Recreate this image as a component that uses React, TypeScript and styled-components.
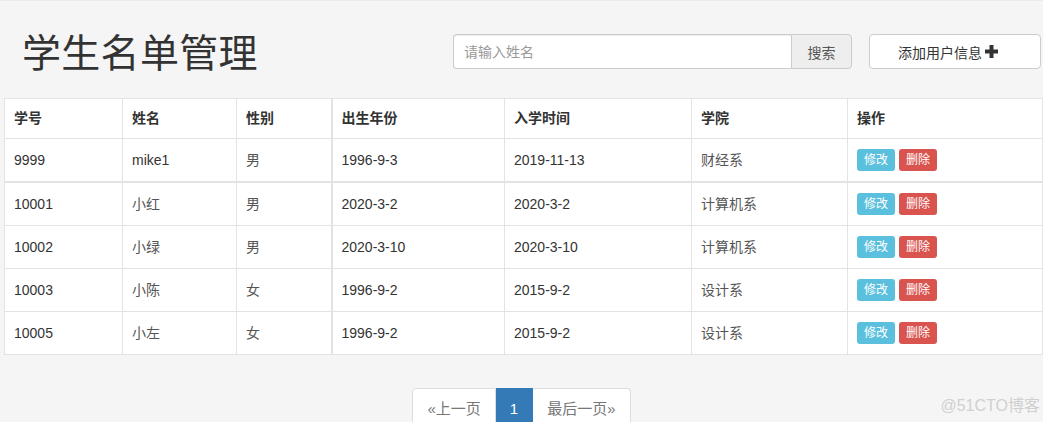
import React from "react";
import styled, { createGlobalStyle } from "styled-components";

const GlobalStyle = createGlobalStyle`
  html, body {
    margin: 0;
    padding: 0;
    background: #fff;
    font-family: "Liberation Sans", "Noto Sans CJK SC", sans-serif;
    color: #333;
  }
`;

const Page = styled.div`
  position: relative;
  width: 1043px;
  height: 422px;
  overflow: hidden;
  background: #f5f5f5;
  border-top: 1px solid #ececec;
  box-sizing: border-box;
`;

const Header = styled.div`
  display: flex;
  align-items: flex-start;
  height: 97px;
  padding: 0 2px 0 22px;
  box-sizing: border-box;
`;

const Title = styled.h1`
  margin: 30px 0 0;
  font-size: 39px;
  line-height: 46px;
  font-weight: normal;
  letter-spacing: 0.3px;
  color: #333;
`;

const InputGroup = styled.div`
  display: flex;
  margin: 33px 0 0 auto;
  width: 399px;
  height: 35px;
`;

const SearchInput = styled.input`
  flex: 1;
  min-width: 0;
  border: 1px solid #ccc;
  border-right: none;
  border-radius: 4px 0 0 4px;
  padding: 0 10px;
  font-size: 14px;
  font-family: inherit;
  background: #fff;
  box-shadow: inset 0 1px 1px rgba(0, 0, 0, 0.075);
  &::placeholder {
    color: #999;
  }
`;

const Addon = styled.span`
  display: flex;
  align-items: center;
  justify-content: center;
  width: 59px;
  background: #eee;
  border: 1px solid #ccc;
  border-radius: 0 4px 4px 0;
  font-size: 14px;
  color: #555;
`;

const AddButton = styled.button`
  display: flex;
  align-items: center;
  gap: 3px;
  margin: 33px 0 0 17px;
  width: 172px;
  height: 35px;
  background: #fff;
  border: 1px solid #ccc;
  border-radius: 4px;
  font-family: inherit;
  font-size: 14px;
  color: #333;
  padding: 0 0 0 28px;
`;

const Table = styled.table`
  margin-left: 4px;
  width: 1038px;
  border-collapse: collapse;
  table-layout: fixed;
  background: #fff;
  font-size: 14px;
`;

const Th = styled.th<{ $thick?: boolean }>`
  text-align: left;
  font-weight: bold;
  padding: 10px 9px;
  line-height: 19px;
  border: 1px solid #e3e3e3;
  border-left-width: ${(p) => (p.$thick ? "2px" : "1px")};
  color: #333;
`;

const Td = styled.td<{ $thick?: boolean; $light?: boolean }>`
  padding: 10px 9px;
  line-height: 21px;
  border: 1px solid #e3e3e3;
  border-left-width: ${(p) => (p.$thick ? "2px" : "1px")};
  color: ${(p) => (p.$light ? "#555" : "#333")};
  white-space: nowrap;
  vertical-align: middle;
`;

const Row = styled.tr<{ $split?: boolean }>`
  & > td {
    border-bottom: ${(p) => (p.$split ? "2px solid #e3e3e3" : "1px solid #e3e3e3")};
  }
`;

const SmallButton = styled.span<{ $color: string }>`
  display: inline-block;
  height: 22px;
  line-height: 22px;
  padding: 0 7px;
  margin-right: 4px;
  border-radius: 3px;
  font-size: 12px;
  color: #fff;
  background: ${(p) => p.$color};
  vertical-align: top;
`;

const Pager = styled.ul`
  display: flex;
  justify-content: center;
  list-style: none;
  margin: 33px 0 0;
  padding: 0;
`;

const PageItem = styled.li<{ $active?: boolean; $first?: boolean; $last?: boolean }>`
  height: 40px;
  padding: 0 14px;
  line-height: 40px;
  font-size: 15px;
  border: 1px solid ${(p) => (p.$active ? "#337ab7" : "#ddd")};
  border-left: ${(p) => (p.$first ? "1px solid #ddd" : "none")};
  border-radius: ${(p) => (p.$first ? "4px 0 0 0" : p.$last ? "0 4px 0 0" : "0")};
  background: ${(p) => (p.$active ? "#337ab7" : "#fff")};
  color: ${(p) => (p.$active ? "#fff" : "#777")};
`;

const Watermark = styled.div`
  position: absolute;
  right: 3px;
  bottom: 6px;
  font-size: 16px;
  color: #d0d0d0;
`;

const PlusIcon = () => (
  <svg width="13" height="13" viewBox="0 0 13 13">
    <path d="M4.5 0h4v4.5H13v4H8.5V13h-4V8.5H0v-4h4.5z" fill="#333" />
  </svg>
);

const students = [
  ["9999", "mike1", "男", "1996-9-3", "2019-11-13", "财经系"],
  ["10001", "小红", "男", "2020-3-2", "2020-3-2", "计算机系"],
  ["10002", "小绿", "男", "2020-3-10", "2020-3-10", "计算机系"],
  ["10003", "小陈", "女", "1996-9-2", "2015-9-2", "设计系"],
  ["10005", "小左", "女", "1996-9-2", "2015-9-2", "设计系"],
];

const widths = [118, 114, 95, 173, 187, 156, 195];
const heads = ["学号", "姓名", "性别", "出生年份", "入学时间", "学院", "操作"];

const isCjk = (s: string) => /[\u4e00-\u9fff]/.test(s);

export default function App() {
  return (
    <>
      <GlobalStyle />
      <Page>
        <Header>
          <Title>学生名单管理</Title>
          <InputGroup>
            <SearchInput placeholder="请输入姓名" />
            <Addon>搜索</Addon>
          </InputGroup>
          <AddButton>
            添加用户信息
            <PlusIcon />
          </AddButton>
        </Header>
        <Table>
          <colgroup>
            {widths.map((w, i) => (
              <col key={i} style={{ width: w }} />
            ))}
          </colgroup>
          <thead>
            <tr>
              {heads.map((h, i) => (
                <Th key={h} $thick={i === 3}>
                  {h}
                </Th>
              ))}
            </tr>
          </thead>
          <tbody>
            {students.map((s, r) => (
              <Row key={s[0]} $split={r === 0}>
                {s.map((v, i) => (
                  <Td key={i} $thick={i === 3} $light={isCjk(v)}>
                    {v}
                  </Td>
                ))}
                <Td>
                  <SmallButton $color="#5bc0de">修改</SmallButton>
                  <SmallButton $color="#d9534f">删除</SmallButton>
                </Td>
              </Row>
            ))}
          </tbody>
        </Table>
        <Pager>
          <PageItem $first>«上一页</PageItem>
          <PageItem $active>1</PageItem>
          <PageItem $last>最后一页»</PageItem>
        </Pager>
        <Watermark>@51CTO博客</Watermark>
      </Page>
    </>
  );
}
